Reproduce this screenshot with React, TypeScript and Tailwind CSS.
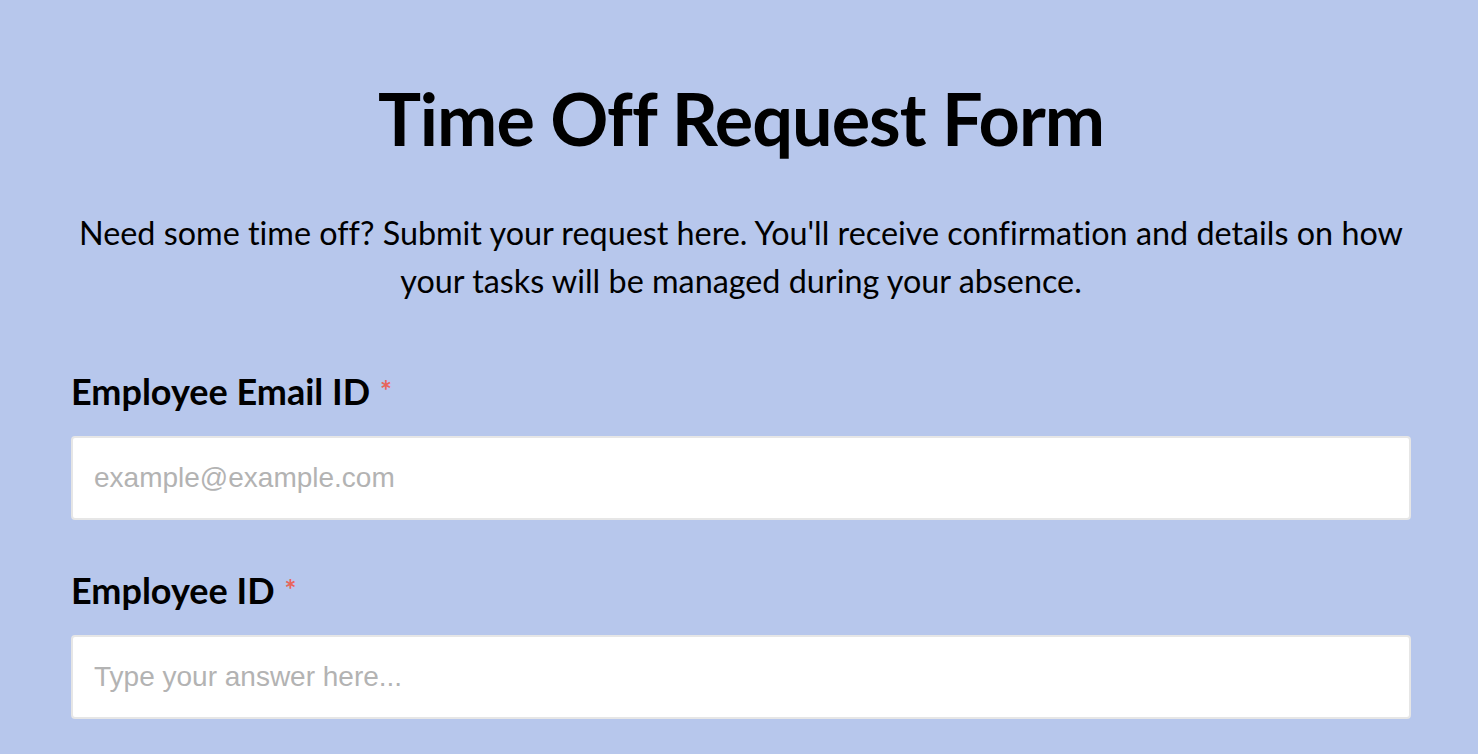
export default function App() {
  return (
    <div className="min-h-screen bg-[#b7c7ec] font-['Lato',sans-serif] text-black [font-variant-ligatures:none]">
      <div className="pl-[71px] pr-[67px] pt-[70px]">
        <h1 className="text-center text-[72px] font-bold leading-[96px] tracking-[-1px]">
          Time Off Request Form
        </h1>
        <p className="mt-[43px] text-center text-[32.35px] leading-[48px]">
          Need some time off? Submit your request here. You'll receive confirmation and details on how
          <br />
          your tasks will be managed during your absence.
        </p>

        <div className="mt-[62px] flex flex-col gap-[46px]">
          {[
            { label: "Employee Email ID", placeholder: "example@example.com", type: "email" },
            { label: "Employee ID", placeholder: "Type your answer here...", type: "text" },
          ].map((f) => (
            <div key={f.label} className="flex flex-col">
              <label className="flex items-center text-[36px] font-bold leading-[48px]">
                {f.label}
                <span className="ml-[10px] mt-[-2px] text-[28px] leading-[28px] text-[#e8645a]">*</span>
              </label>
              <input
                type={f.type}
                placeholder={f.placeholder}
                className="mt-[21px] h-[84px] w-full rounded-[4px] border-2 border-[#e6e6e6] bg-white px-[21px] font-['Liberation_Sans',Arial,sans-serif] text-[28px] text-black outline-none placeholder:text-[#b3b3b3]"
              />
            </div>
          ))}
        </div>
      </div>
    </div>
  );
}
